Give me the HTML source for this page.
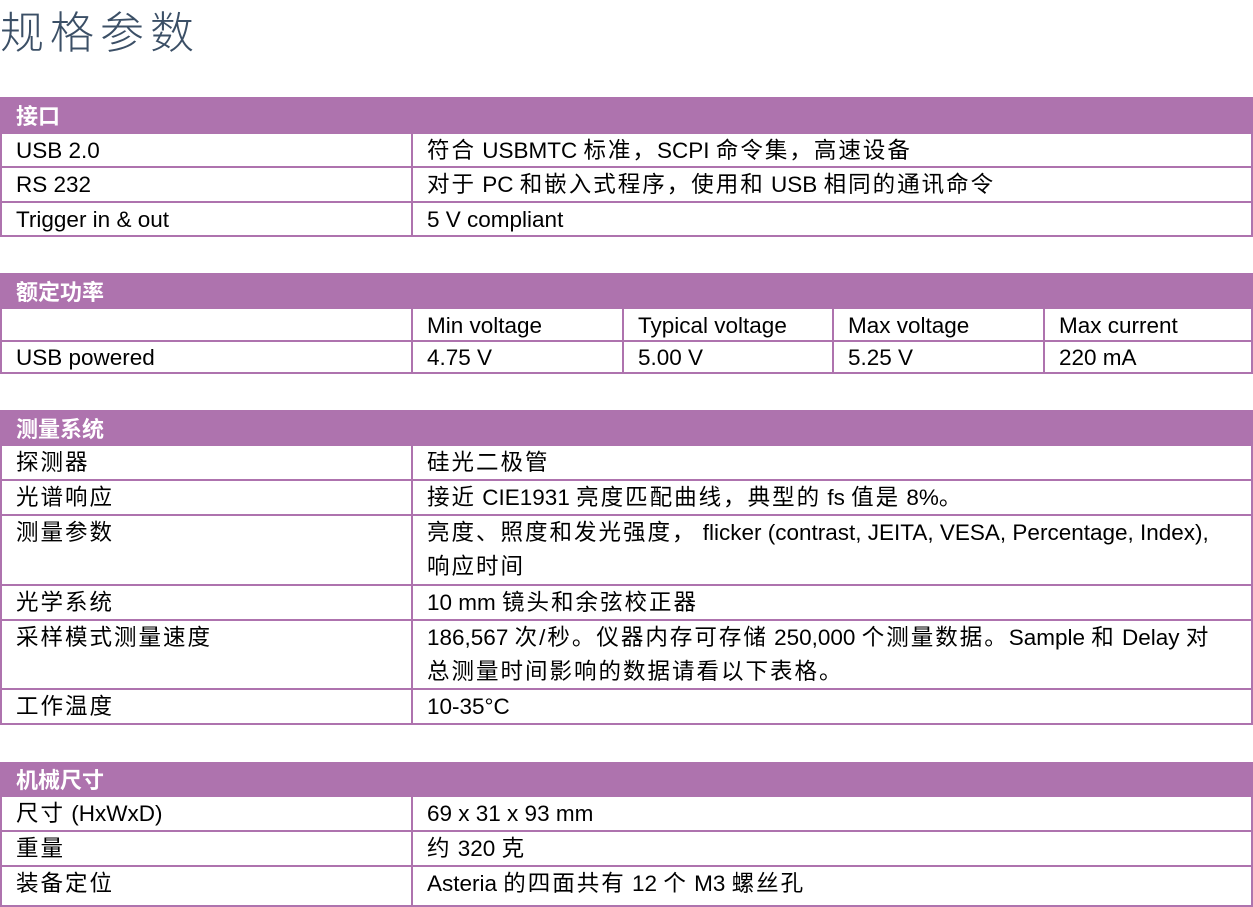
<!DOCTYPE html>
<html><head><meta charset="utf-8"><style>
body{margin:0;width:1253px;height:897px;overflow:hidden;background:#fff;position:relative;font-family:"Liberation Sans","Noto Sans CJK SC",sans-serif;color:#000}
.t{position:absolute;left:0;top:0;font-size:44px;color:#3b4f66;letter-spacing:6px;font-family:"Noto Sans CJK SC",sans-serif;font-weight:300;line-height:58px}
.h{position:absolute;left:0;width:1253px;background:#ae73ae;color:#fff;font-size:22px;font-weight:bold;box-sizing:border-box;padding-left:16px;font-family:"Noto Sans CJK SC",sans-serif}
.r{position:absolute;left:0;width:1253px;box-sizing:border-box;border:2px solid #ae73ae;border-top:none;font-size:22.5px;line-height:34px}
.c{position:absolute;top:0;bottom:0;padding-left:14px;box-sizing:border-box;white-space:nowrap}
.c+.c{border-left:2px solid #ae73ae}
.j{letter-spacing:2px}
</style></head><body>
<div class="t">规格参数</div>

<div class="h" style="top:97px;height:37px;line-height:37px">接口</div>
<div class="r" style="top:134px;height:34px"><div class="c" style="left:0;padding-left:14px">USB 2.0</div><div class="c" style="left:409px"><span class="j">符合</span> USBMTC <span class="j">标准，</span>SCPI <span class="j">命令集，高速设备</span></div></div>
<div class="r" style="top:168px;height:35px"><div class="c" style="left:0">RS 232</div><div class="c" style="left:409px"><span class="j">对于</span> PC <span class="j">和嵌入式程序，使用和</span> USB <span class="j">相同的通讯命令</span></div></div>
<div class="r" style="top:203px;height:34px"><div class="c" style="left:0">Trigger in &amp; out</div><div class="c" style="left:409px">5 V compliant</div></div>

<div class="h" style="top:273px;height:36px;line-height:36px">额定功率</div>
<div class="r" style="top:309px;height:33px"><div class="c" style="left:0"></div><div class="c" style="left:409px">Min voltage</div><div class="c" style="left:620px">Typical voltage</div><div class="c" style="left:830px">Max voltage</div><div class="c" style="left:1041px">Max current</div></div>
<div class="r" style="top:342px;height:32px;line-height:32px"><div class="c" style="left:0">USB powered</div><div class="c" style="left:409px">4.75 V</div><div class="c" style="left:620px">5.00 V</div><div class="c" style="left:830px">5.25 V</div><div class="c" style="left:1041px">220 mA</div></div>

<div class="h" style="top:410px;height:36px;line-height:36px">测量系统</div>
<div class="r" style="top:446px;height:35px"><div class="c j" style="left:0">探测器</div><div class="c j" style="left:409px">硅光二极管</div></div>
<div class="r" style="top:481px;height:35px"><div class="c j" style="left:0">光谱响应</div><div class="c" style="left:409px"><span class="j">接近</span> CIE1931 <span class="j">亮度匹配曲线，典型的</span> fs <span class="j">值是</span> 8%。</div></div>
<div class="r" style="top:516px;height:70px"><div class="c j" style="left:0">测量参数</div><div class="c" style="left:409px"><span class="j">亮度、照度和发光强度，</span> flicker (contrast, JEITA, VESA, Percentage, Index),<br><span class="j">响应时间</span></div></div>
<div class="r" style="top:586px;height:35px"><div class="c j" style="left:0">光学系统</div><div class="c" style="left:409px">10 mm <span class="j">镜头和余弦校正器</span></div></div>
<div class="r" style="top:621px;height:69px"><div class="c j" style="left:0">采样模式测量速度</div><div class="c" style="left:409px">186,567 <span class="j">次/秒。仪器内存可存储</span> 250,000 <span class="j">个测量数据。</span>Sample <span class="j">和</span> Delay <span class="j">对</span><br><span class="j">总测量时间影响的数据请看以下表格。</span></div></div>
<div class="r" style="top:690px;height:35px"><div class="c j" style="left:0">工作温度</div><div class="c" style="left:409px">10-35°C</div></div>

<div class="h" style="top:762px;height:35px;line-height:35px">机械尺寸</div>
<div class="r" style="top:797px;height:35px"><div class="c" style="left:0"><span class="j">尺寸</span> (HxWxD)</div><div class="c" style="left:409px">69 x 31 x 93 mm</div></div>
<div class="r" style="top:832px;height:35px"><div class="c j" style="left:0">重量</div><div class="c" style="left:409px"><span class="j">约</span> 320 <span class="j">克</span></div></div>
<div class="r" style="top:867px;height:40px"><div class="c j" style="left:0">装备定位</div><div class="c" style="left:409px">Asteria <span class="j">的四面共有</span> 12 <span class="j">个</span> M3 <span class="j">螺丝孔</span></div></div>
</body></html>
